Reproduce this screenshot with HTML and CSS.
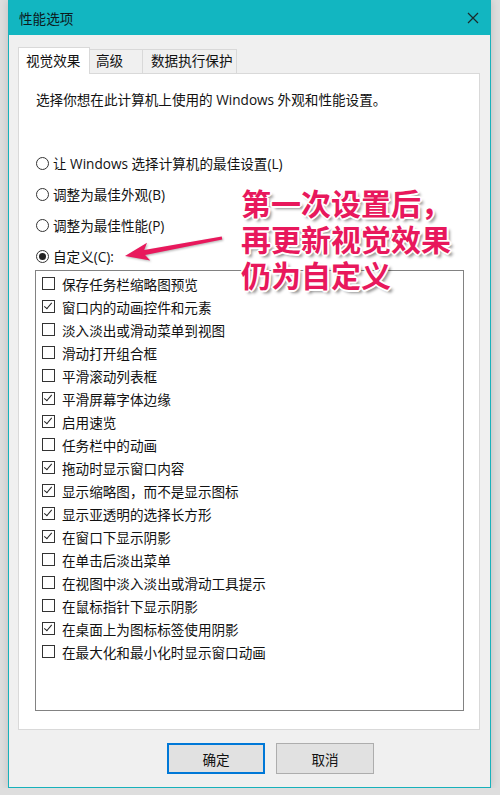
FILE: index.html
```html
<!DOCTYPE html>
<html lang="zh-CN">
<head>
  <meta charset="UTF-8">
  <title>性能选项</title>
  <link rel="stylesheet" href="styles.css">
</head>
<body>
  <div class="window">
    <div class="titlebar">
      <span class="title">性能选项</span>
      <svg class="close" width="12" height="12" viewBox="0 0 12 12">
        <path d="M1 1 L11 11 M11 1 L1 11" stroke="#1b2a2c" stroke-width="1.2" fill="none"/>
      </svg>
    </div>

    <div class="dialog">
      <div class="tabs">
        <div class="tab active">视觉效果</div>
        <div class="tab tab-adv">高级</div>
        <div class="tab tab-dep">数据执行保护</div>
      </div>

      <div class="panel">
        <p class="desc">选择你想在此计算机上使用的 Windows 外观和性能设置。</p>

        <div class="radios">
          <div class="radio-row"><span class="radio"></span>让 Windows 选择计算机的最佳设置(L)</div>
          <div class="radio-row"><span class="radio"></span>调整为最佳外观(B)</div>
          <div class="radio-row"><span class="radio"></span>调整为最佳性能(P)</div>
          <div class="radio-row"><span class="radio checked"></span>自定义(C):</div>
        </div>

        <div class="listbox">
          <div class="item"><span class="box"></span>保存任务栏缩略图预览</div>
          <div class="item"><span class="box on"></span>窗口内的动画控件和元素</div>
          <div class="item"><span class="box"></span>淡入淡出或滑动菜单到视图</div>
          <div class="item"><span class="box"></span>滑动打开组合框</div>
          <div class="item"><span class="box"></span>平滑滚动列表框</div>
          <div class="item"><span class="box on"></span>平滑屏幕字体边缘</div>
          <div class="item"><span class="box on"></span>启用速览</div>
          <div class="item"><span class="box"></span>任务栏中的动画</div>
          <div class="item"><span class="box on"></span>拖动时显示窗口内容</div>
          <div class="item"><span class="box on"></span>显示缩略图，而不是显示图标</div>
          <div class="item"><span class="box on"></span>显示亚透明的选择长方形</div>
          <div class="item"><span class="box on"></span>在窗口下显示阴影</div>
          <div class="item"><span class="box"></span>在单击后淡出菜单</div>
          <div class="item"><span class="box"></span>在视图中淡入淡出或滑动工具提示</div>
          <div class="item"><span class="box"></span>在鼠标指针下显示阴影</div>
          <div class="item"><span class="box on"></span>在桌面上为图标标签使用阴影</div>
          <div class="item"><span class="box"></span>在最大化和最小化时显示窗口动画</div>
        </div>
      </div>

      <div class="buttons">
        <button class="btn default">确定</button>
        <button class="btn">取消</button>
      </div>
    </div>
  </div>

  <!-- annotation laid over the dialog -->
  <div class="note">
    <div class="note-line">第一次设置后，</div>
    <div class="note-line">再更新视觉效果</div>
    <div class="note-line">仍为自定义</div>
  </div>
  <svg class="arrow" width="110" height="40" viewBox="0 0 110 40">
    <polygon points="5,28 30.2,32.4 25.1,26.9 102.3,11.5 101.7,8.5 24.2,21.9 27,14.8" fill="#e8185c"/>
  </svg>
</body>
</html>
```

FILE: styles.css
```css
body {
  margin: 0;
  background: #dedede;
  font-family: "Open Sans", "Noto Sans CJK SC", sans-serif;
  font-size: 13.6px;
  color: #111;
}

.window {
  box-sizing: border-box;
  margin-left: 8px;
  width: 483px;
  height: 788px;
  border: 1px solid #17b1bb;
  border-top: none;
  background: #f0f0f0;
  box-shadow: 0 0 8px rgba(0, 0, 0, 0.15);
}

.titlebar {
  height: 35px;
  background: #12b6c1;
  display: flex;
  align-items: center;
  justify-content: space-between;
  padding: 0 11px 0 10px;
}

.title {
  font-size: 13.6px;
  color: #0c1a1c;
}

.dialog {
  padding: 12px 10px 0 9px;
}

.tabs {
  display: flex;
  align-items: flex-end;
  height: 26px;
}

.tab {
  box-sizing: border-box;
  height: 24px;
  line-height: 22px;
  border: 1px solid #d9d9d9;
  border-bottom: none;
  background: #f0f0f0;
  padding-left: 6px;
}

.tab.active {
  height: 27px;
  margin-bottom: -1px;
  width: 72px;
  background: #fff;
  padding-left: 7px;
  line-height: 25px;
  position: relative;
}

.tab-adv {
  width: 53px;
  border-left: none;
}

.tab-dep {
  width: 94px;
  border-left: none;
  padding-left: 8px;
}

.panel {
  box-sizing: border-box;
  width: 462px;
  height: 657px;
  background: #fff;
  border: 1px solid #d9d9d9;
  padding: 16px 0 0 17px;
}

.desc {
  margin: 0;
  line-height: 20px;
}

.radios {
  margin-top: 43px;
  display: flex;
  flex-direction: column;
  gap: 11px;
}

.radio-row {
  display: flex;
  align-items: center;
  height: 20px;
}

.radio {
  box-sizing: border-box;
  width: 13px;
  height: 13px;
  border: 1px solid #333;
  border-radius: 50%;
  margin-right: 4px;
  display: flex;
  align-items: center;
  justify-content: center;
}

.radio.checked::after {
  content: "";
  width: 7px;
  height: 7px;
  border-radius: 50%;
  background: #222;
}

.listbox {
  box-sizing: border-box;
  margin: 4px 0 0 -1px;
  width: 429px;
  height: 441px;
  border: 1px solid #828282;
  padding-top: 1px;
}

.item {
  display: flex;
  align-items: center;
  height: 23px;
  padding-left: 6px;
}

.box {
  box-sizing: border-box;
  width: 13px;
  height: 13px;
  border: 1px solid #333;
  margin-right: 7px;
  position: relative;
}

.box.on::after {
  content: "";
  position: absolute;
  left: 3px;
  top: 0px;
  width: 3px;
  height: 7px;
  border-right: 1.2px solid #222;
  border-bottom: 1.2px solid #222;
  transform: rotate(40deg);
}

.buttons {
  display: flex;
  gap: 11px;
  padding: 13px 0 0 149px;
}

.btn {
  box-sizing: border-box;
  width: 98px;
  height: 31px;
  background: #e1e1e1;
  border: 1px solid #adadad;
  font-family: "Noto Sans CJK SC", sans-serif;
  font-size: 13.6px;
  color: #111;
  padding: 0;
}

.btn.default {
  border: 2px solid #0078d7;
}

.note {
  position: absolute;
  left: 241px;
  top: 184px;
  font-family: "Noto Sans CJK SC", sans-serif;
  font-size: 30px;
  font-weight: 700;
  color: #e8185c;
  text-shadow:
    -1px -1px 0 #fff, 1px -1px 0 #fff, -1px 1px 0 #fff, 1px 1px 0 #fff,
    0 -2px 0 #fff, 0 2px 0 #fff, -2px 0 0 #fff, 2px 0 0 #fff,
    3px 3px 3px rgba(0, 0, 0, 0.45);
}

.note-line {
  height: 36px;
  line-height: 36px;
}

.arrow {
  position: absolute;
  left: 120px;
  top: 228px;
  filter: drop-shadow(1px 1px 1px rgba(0, 0, 0, 0.3));
}
```
